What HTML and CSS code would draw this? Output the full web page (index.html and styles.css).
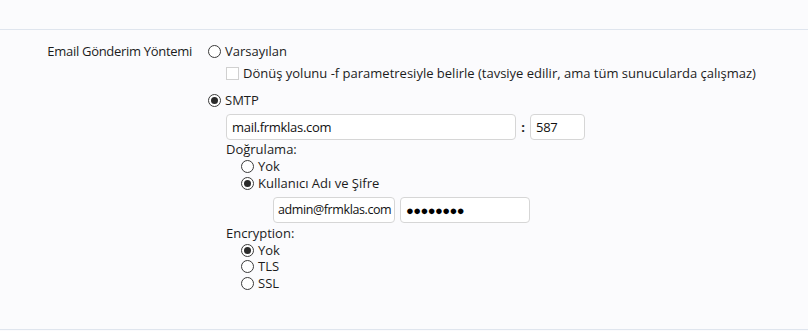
FILE: index.html
```html
<!DOCTYPE html>
<html>
<head>
<meta charset="utf-8">
<link rel="stylesheet" href="styles.css">
</head>
<body>
<div class="top"></div>
<div class="row">
  <div class="label">Email Gönderim Yöntemi</div>
  <div class="controls">
    <div class="opt first"><span class="radio"></span><span>Varsayılan</span></div>
    <div class="opt check-line"><span class="check"></span><span>Dönüş yolunu -f parametresiyle belirle (tavsiye edilir, ama tüm sunucularda çalışmaz)</span></div>
    <div class="opt smtp"><span class="radio on"></span><span>SMTP</span></div>
    <div class="smtp-block">
      <div class="host-line">
        <div class="input host">mail.frmklas.com</div>
        <span class="colon">:</span>
        <div class="input port">587</div>
      </div>
      <div class="sub-title">Doğrulama:</div>
      <div class="sub-opts">
        <div class="opt"><span class="radio"></span><span>Yok</span></div>
        <div class="opt"><span class="radio on"></span><span>Kullanıcı Adı ve Şifre</span></div>
      </div>
      <div class="cred-line">
        <div class="input user">admin@frmklas.com</div>
        <div class="input pass">●●●●●●●●</div>
      </div>
      <div class="sub-title enc">Encryption:</div>
      <div class="sub-opts">
        <div class="opt"><span class="radio on"></span><span>Yok</span></div>
        <div class="opt"><span class="radio"></span><span>TLS</span></div>
        <div class="opt"><span class="radio"></span><span>SSL</span></div>
      </div>
    </div>
  </div>
</div>
</body>
</html>
```

FILE: styles.css
```css
html, body {
  margin: 0;
  padding: 0;
  background: #fbfbfd;
}
body {
  font-family: "Open Sans", "Noto Sans", sans-serif;
  font-size: 13px;
  color: #1c1c1c;
  width: 808px;
  height: 331px;
  overflow: hidden;
}
.top {
  height: 29px;
  border-bottom: 1px solid #dfe5ee;
}
.row {
  display: flex;
  height: 300px;
  border-bottom: 1px solid #dfe5ee;
  box-sizing: border-box;
  padding-top: 12px;
}
.label {
  width: 192px;
  text-align: right;
  padding-right: 16px;
  line-height: 17px;
  padding-top: 1px;
  letter-spacing: -0.3px;
}
.controls {
  display: flex;
  flex-direction: column;
}
.opt {
  display: flex;
  align-items: center;
  height: 17px;
  line-height: 17px;
}
.radio {
  width: 11px;
  height: 11px;
  border: 1px solid #3a3a3a;
  border-radius: 50%;
  background: #fff;
  margin-right: 4px;
  display: flex;
  align-items: center;
  justify-content: center;
  flex: none;
}
.radio.on::after {
  content: "";
  width: 7px;
  height: 7px;
  border-radius: 50%;
  background: #2a2a2a;
}
.first {
  margin-top: 1px;
}
.check-line {
  margin-top: 5px;
  padding-left: 18px;
}
.check {
  width: 11px;
  height: 11px;
  border: 1px solid #d0d0d0;
  background: #fff;
  margin-right: 4px;
  flex: none;
}
.smtp {
  margin-top: 10px;
}
.smtp-block {
  padding-left: 18px;
  display: flex;
  flex-direction: column;
}
.host-line {
  display: flex;
  align-items: center;
  margin-top: 5px;
}
.input {
  height: 26px;
  box-sizing: border-box;
  border: 1px solid #d6d6d6;
  border-radius: 4px;
  background: #fff;
  padding: 0 5px;
  line-height: 24px;
  color: #111;
  letter-spacing: -0.3px;
  white-space: nowrap;
  overflow: hidden;
}
.host {
  width: 290px;
}
.colon {
  width: 14px;
  text-align: center;
  font-weight: bold;
}
.port {
  width: 55px;
}
.sub-title {
  line-height: 17px;
  margin-top: 1px;
}
.sub-opts {
  padding-left: 15px;
  display: flex;
  flex-direction: column;
}
.cred-line {
  display: flex;
  gap: 5px;
  padding-left: 47px;
  margin-top: 5px;
}
.user {
  width: 122px;
  padding: 0 4px;
  font-size: 12.5px;
  letter-spacing: -0.4px;
}
.pass {
  width: 130px;
  font-size: 13px;
  letter-spacing: -0.6px;
  color: #000;
}
.enc {
  margin-top: 2px;
}
.enc + .sub-opts .opt {
  height: 16.5px;
}
```
